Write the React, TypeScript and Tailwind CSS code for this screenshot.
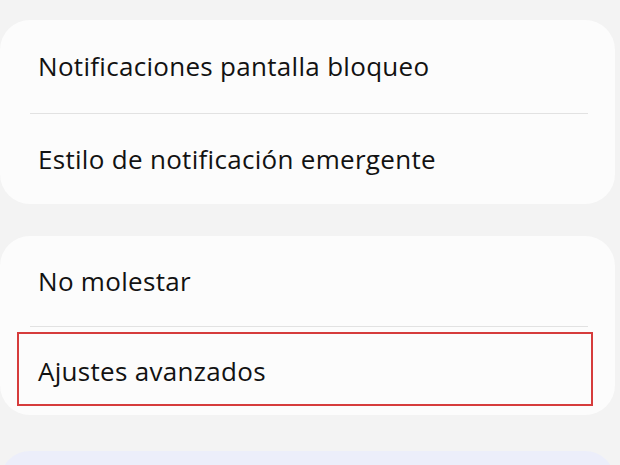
import React from 'react'

const font = { fontFamily: '"Open Sans", Roboto, sans-serif' }

function Row({ label, h }: { label: string; h: string }) {
  return (
    <div className={`flex items-center pl-[38px] ${h}`}>
      <span className="text-[26px] text-[#121212] tracking-[0.3px]">{label}</span>
    </div>
  )
}

export default function App() {
  return (
    <div className="w-[620px] h-[465px] overflow-hidden bg-[#f3f3f3]" style={font}>
      <div className="pt-[20px] pr-[5px] flex flex-col">
        {/* group 1 */}
        <div className="rounded-[30px] bg-[#fcfcfc]">
          <Row label="Notificaciones pantalla bloqueo" h="h-[93px]" />
          <div className="ml-[30px] mr-[27px] h-px bg-[#e2e2e2]" />
          <Row label="Estilo de notificación emergente" h="h-[90px]" />
        </div>

        {/* group 2 */}
        <div className="mt-[32px] rounded-[30px] bg-[#fcfcfc] relative">
          <Row label="No molestar" h="h-[90px]" />
          <div className="ml-[30px] mr-[27px] h-px bg-[#e2e2e2]" />
          <Row label="Ajustes avanzados" h="h-[88px]" />
          <div className="absolute left-[17px] top-[96px] w-[576px] h-[74px] border-2 border-[#d63c3c]" />
        </div>

        {/* group 3 */}
        <div className="mt-[36px] h-[80px] rounded-[30px] bg-[#eceefa]" />
      </div>
    </div>
  )
}
